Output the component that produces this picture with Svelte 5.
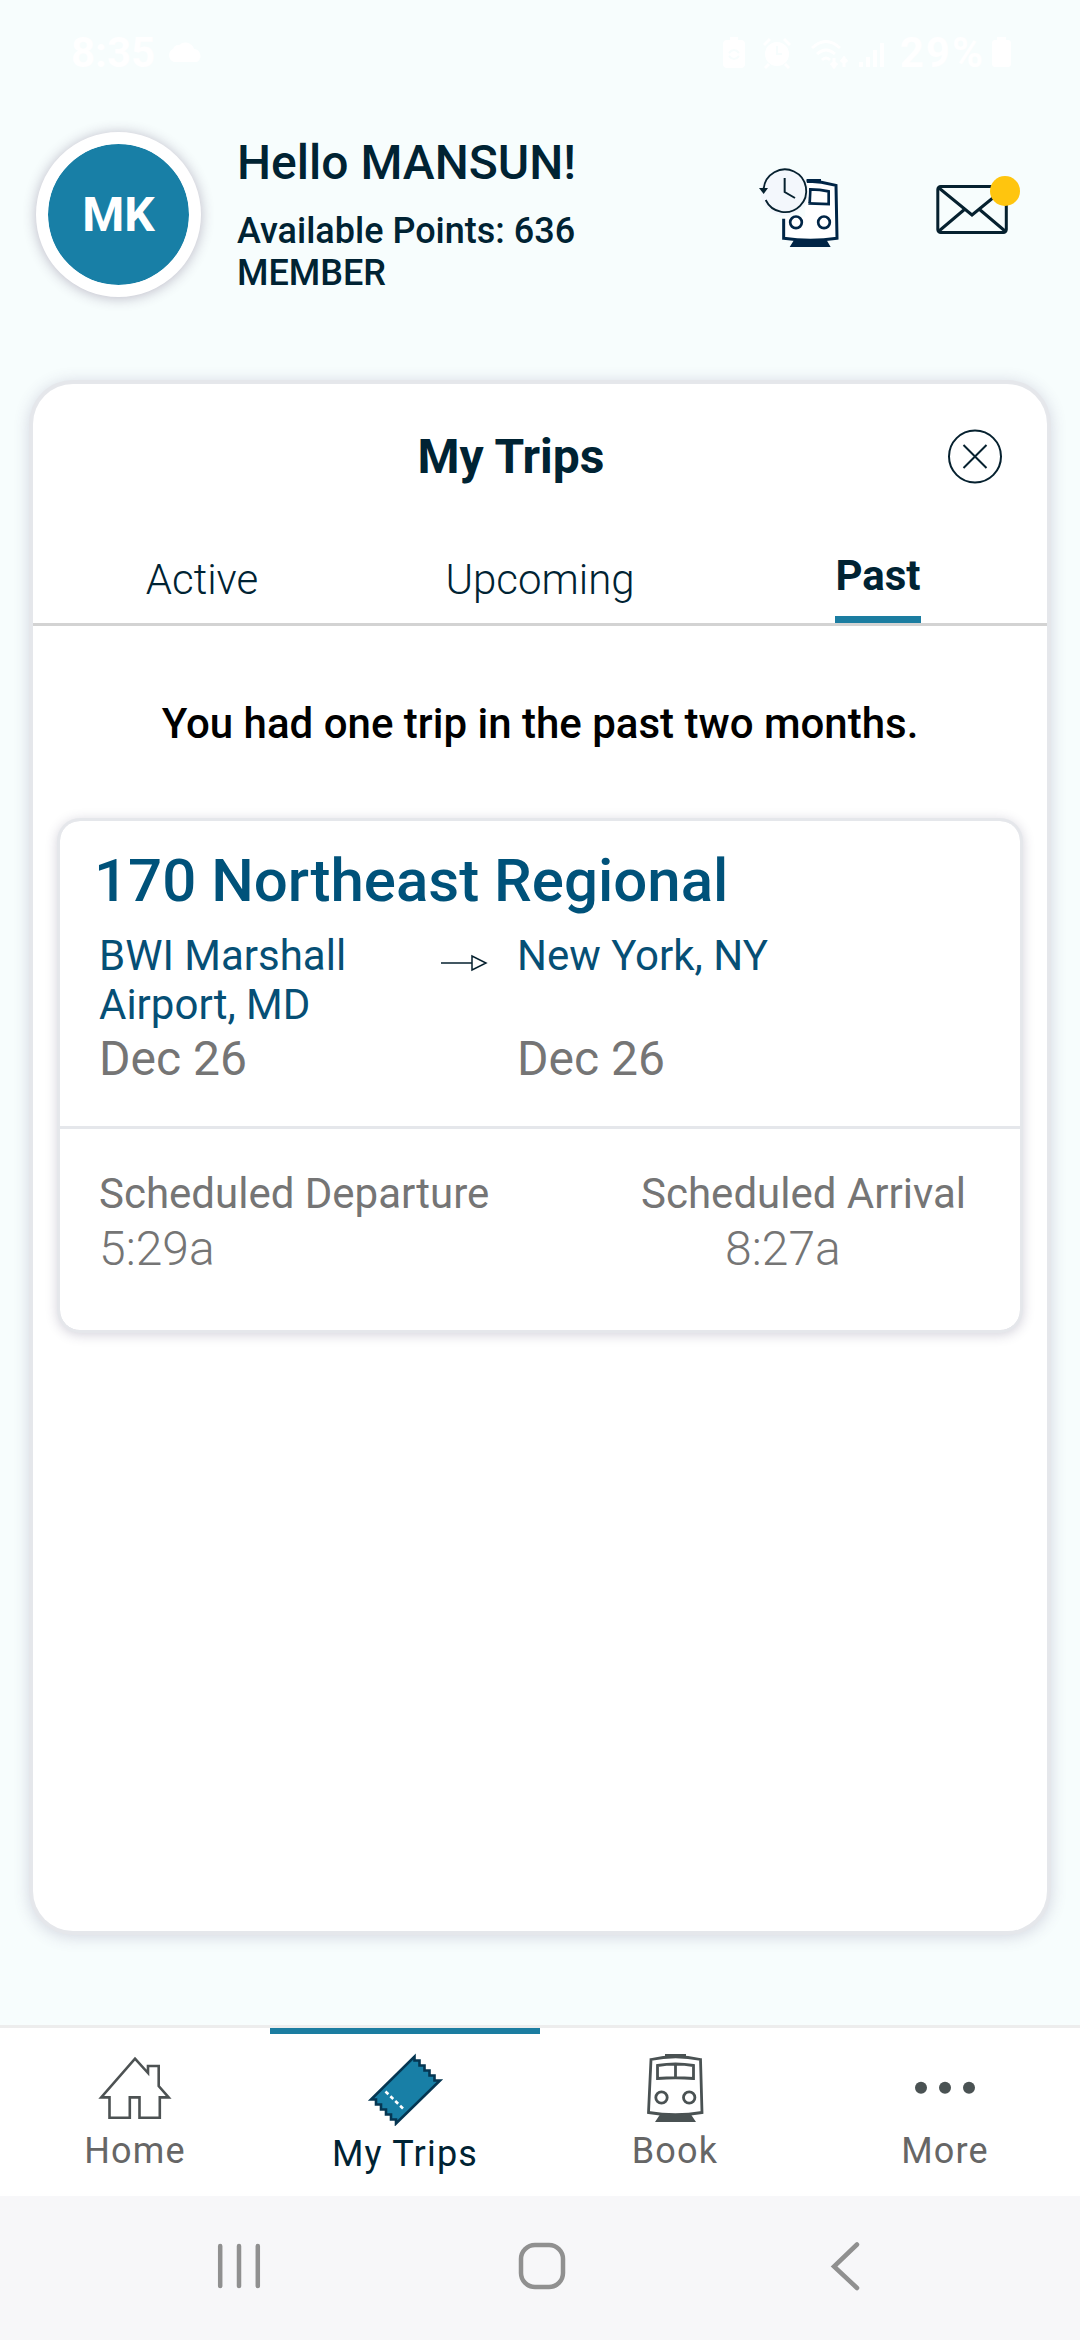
<script>
  const tabs = ['Active', 'Upcoming', 'Past'];
  const trip = {
    name: '170 Northeast Regional',
    from: 'BWI Marshall Airport, MD',
    to: 'New York, NY',
    date: 'Dec 26',
    departs: '5:29a',
    arrives: '8:27a'
  };
</script>

<div class="screen">
  <div class="status">
    <span class="clock">8:35</span>
    <svg class="cloud" width="38" height="24" viewBox="0 0 38 24"><path d="M8 22a7 7 0 0 1-1-13 6 6 0 0 1 6-4 9 9 0 0 1 15 4 7 7 0 0 1 3 13z" /></svg>
    <svg class="indicators" width="176" height="36" viewBox="0 0 176 36">
      <path d="M8 3h8v3h3q4 0 4 4v20q0 4-4 4H5q-4 0-4-4V10q0-4 4-4h3z" />
      <path class="cut" d="M7 19q5-6 10 0M17 22q-5 6-10 0" />
      <circle cx="55" cy="20" r="12" /><path class="line" d="M42 11l6-6M68 11l-6-6M47 30l-4 4M63 30l4 4" /><path class="cut" d="M55 12v8h5" />
      <path class="line" d="M90 14q14-13 28 0M95 20q9-8 18 0M100 26q4-4 8 0M112 24v9m-3-4l3 4 3-4M122 33v-9m-3 4l3-4 3 4" />
      <path d="M137 28h4v5h-4zM144 23h4v10h-4zM151 16h4v17h-4zM158 9h4v24h-4z" />
    </svg>
    <span class="percent">29%</span>
    <svg width="22" height="34" viewBox="0 0 22 34"><path d="M6 2h9v3h2q3 0 3 3v21q0 3-3 3H4q-3 0-3-3V8q0-3 3-3h2z" /></svg>
  </div>

  <header>
    <div class="avatar">MK</div>
    <div class="greeting">
      <div class="hello">Hello MANSUN!</div>
      <div class="points">Available Points: 636</div>
      <div class="points">MEMBER</div>
    </div>
    <svg class="history" width="120" height="120" viewBox="0 0 360 360">
      <path d="M131 200V265Q212 277 291 265L288 106Q244 94 196 93V200Z" fill="#fff" />
      <path d="M131 206V265Q212 277 291 265L288 106Q244 94 200 93" fill="none" stroke="#002546" stroke-width="9" />
      <path d="M200 87H243V99H200Z M164 267Q212 275 258 267L272 291H149Z" fill="#002546" />
      <path d="M205 160L266 162V124Q240 118 211 118L209 160" fill="none" stroke="#002546" stroke-width="8" />
      <g fill="none" stroke="#002546" stroke-width="8"><circle cx="168" cy="217" r="17.5" /><circle cx="252" cy="217" r="17.5" /></g>
      <circle cx="134" cy="126" r="72" fill="#f3f7fc" />
      <path d="M77 150A64 64 0 1 0 71 116" fill="none" stroke="#06212f" stroke-width="5.5" />
      <path d="M57 114H84L71 132Z" fill="#06212f" />
      <path d="M134 84V126L165 144" fill="none" stroke="#06212f" stroke-width="6" />
    </svg>
    <svg class="mail" width="90" height="64" viewBox="0 0 90 64">
      <g fill="none" stroke="#06212f" stroke-width="3">
        <rect x="3.8" y="12.5" width="68.5" height="46" rx="3" />
        <path d="M5 14L38 41 71 14M5 57L31 35M71 57L45 35" />
      </g>
      <circle cx="71" cy="17" r="15" fill="#ffc50e" />
    </svg>
  </header>

  <main>
    <div class="title">
      <h1>My Trips</h1>
      <svg width="56" height="56" viewBox="0 0 56 56" fill="none" stroke="#06212f" stroke-width="2"><circle cx="28" cy="27.5" r="26" /><path d="M16.5 16L39.5 39M39.5 16L16.5 39" /></svg>
    </div>
    <nav class="tabs">
      {#each tabs as tab}
        <div class="tab" class:current={tab === 'Past'}><span>{tab}</span></div>
      {/each}
    </nav>
    <p class="summary">You had one trip in the past two months.</p>

    <section class="trip">
      <div class="route">
        <h2>{trip.name}</h2>
        <div class="stations">
          <span class="from">{trip.from}</span>
          <svg width="48" height="20" viewBox="0 0 48 20" fill="none" stroke="#06212f" stroke-width="1.5"><path d="M1 10H32M32 3V17L46 10Z" /></svg>
          <span>{trip.to}</span>
        </div>
        <div class="dates"><span>{trip.date}</span><span>{trip.date}</span></div>
      </div>
      <div class="times">
        <div><div class="label">Scheduled Departure</div><div class="time">{trip.departs}</div></div>
        <div class="arrival"><div class="label">Scheduled Arrival</div><div class="time">{trip.arrives}</div></div>
      </div>
    </section>
  </main>

  <nav class="bottom">
    <div class="item">
      <svg width="80" height="74" viewBox="95 2052 80 74"><path d="M135 2058.7L148 2073V2066H158.7V2086L168.7 2097.4H159.8V2117.7H139.5V2097.4H129.8V2117.7H109.5V2097.4H101.2Z" fill="none" stroke="#4d5253" stroke-width="2.6" /></svg>
      <span>Home</span>
    </div>
    <div class="item active">
      <svg width="80" height="74" viewBox="365 2052 80 74">
        <path d="M414.5 2056.5v4h5v5h5v5h5v5h5v5h5.5L396 2123.5v-4h-5v-5h-5v-5h-5v-5h-5v-5h-5Z" fill="#187fa6" stroke="#053652" stroke-width="2.6" />
        <path d="M385.5 2091.5L403.5 2109" stroke="#fff" stroke-width="2.6" stroke-dasharray="4 2.8" />
      </svg>
      <span>My Trips</span>
    </div>
    <div class="item">
      <svg width="80" height="74" viewBox="635 2052 80 74" fill="none" stroke="#4a5253" stroke-width="2.8">
        <path d="M651 2059.5Q675.5 2054 700.5 2059.5L702 2112.5Q675.5 2117 648.5 2112.5Z" />
        <path d="M657.5 2065.5Q675.5 2062.5 693.5 2065.5V2078.5Q675.5 2077 657.5 2078.5ZM675.5 2064V2078" />
        <circle cx="661.5" cy="2097.5" r="5.7" /><circle cx="689.2" cy="2097.5" r="5.7" />
        <path d="M665 2054H686V2058H665ZM660 2114.5Q675.5 2116.5 691 2114.5L696 2122H655Z" fill="#4a5253" stroke="none" />
      </svg>
      <span>Book</span>
    </div>
    <div class="item">
      <svg width="80" height="74" viewBox="905 2052 80 74" fill="#4a5253"><circle cx="921" cy="2087.7" r="6" /><circle cx="945" cy="2087.7" r="6" /><circle cx="969" cy="2087.7" r="6" /></svg>
      <span>More</span>
    </div>
  </nav>

  <div class="system">
    <svg width="50" height="50" viewBox="0 0 50 50"><path d="M6.2 5V45M25 5V45M43.8 5V45" stroke-linecap="round" /></svg>
    <svg width="50" height="50" viewBox="0 0 50 50"><rect x="4" y="4" width="42" height="42" rx="14" /></svg>
    <svg width="50" height="50" viewBox="0 0 50 50"><path d="M37 3.5L14 25.5 37 47" stroke-linecap="round" /></svg>
  </div>
</div>

<style>
  :global(body) { margin: 0; }
  .screen { width: 1080px; height: 2340px; display: flex; flex-direction: column; overflow: hidden; background: #f7fdfd; color: #002333; font-family: Roboto, sans-serif; }
  svg { display: block; flex: none; }
  h1, h2, p { margin: 0; }

  .status { box-sizing: border-box; height: 88px; padding: 16px 67px 0 71px; display: flex; align-items: center; color: #fff; font-size: 42px; font-weight: 700; flex: none; }
  .status svg { fill: #fff; }
  .cloud { margin-left: 11px; }
  .indicators { margin-left: auto; }
  .status .line { fill: none; stroke: #fff; stroke-width: 3; }
  .status .cut { fill: none; stroke: #f7fdfd; stroke-width: 2; }
  .percent { margin: 0 6px 0 2px; letter-spacing: 2px; }

  header { height: 296px; display: flex; flex: none; }
  .avatar { box-sizing: border-box; width: 165px; height: 165px; margin: 44px 36px 0 36px; border: 12px solid #fff; border-radius: 50%; background: #187fa6; background-clip: padding-box; box-shadow: 0 1px 13px rgba(60, 40, 80, .32); color: #fff; font-size: 48px; font-weight: 700; line-height: 141px; text-align: center; flex: none; }
  .greeting { width: 503px; padding-top: 47px; font-weight: 500; white-space: nowrap; }
  .hello { font-size: 48px; line-height: 56px; margin-bottom: 19px; }
  .points { font-size: 36px; line-height: 42px; }
  .history { margin-top: 62px; }
  .mail { margin: 86px 0 0 74px; }

  main { box-sizing: border-box; width: 1014px; height: 1547px; margin: 0 33px; border-radius: 40px; background: #fff; box-shadow: 0 0 0 4px #e5e7eb, 0 2px 16px 4px rgba(70, 60, 110, .2); flex: none; }
  .title { height: 145px; display: flex; align-items: center; box-sizing: border-box; padding: 0 44px 0 42px; }
  h1 { flex: 1; text-align: center; font-size: 48px; font-weight: 700; line-height: 56px; padding-top: 1px; }
  .tabs { box-sizing: border-box; height: 97px; border-bottom: 3px solid #d3d3d3; display: grid; grid-template-columns: repeat(3, 1fr); }
  .tab { display: flex; justify-content: center; font-size: 42px; font-weight: 300; line-height: 48px; }
  .tab span { padding-top: 27px; }
  .current { font-weight: 700; }
  .current span { border-bottom: 7px solid #1b7da1; padding-top: 23px; }
  .summary { margin-top: 74px; font-size: 42px; font-weight: 500; line-height: 48px; text-align: center; color: #000; }

  .trip { box-sizing: border-box; height: 509px; margin: 73px 27px 0; border-radius: 20px; box-shadow: 0 0 0 3px #e5e7eb, 0 2px 12px 3px rgba(60, 50, 90, .22); }
  .route { box-sizing: border-box; height: 308px; padding: 27px 35px 0 39px; border-bottom: 3px solid #e5e7eb; }
  h2 { margin-left: -5px; font-size: 60px; font-weight: 500; line-height: 66px; color: #00527a; }
  .stations { display: grid; grid-template-columns: 341px 77px 1fr; padding-top: 17px; font-size: 42px; line-height: 49px; color: #064f75; }
  .from { width: 280px; }
  .stations svg { margin-top: 22px; }
  .dates { display: grid; grid-template-columns: 418px 1fr; font-size: 48px; line-height: 58px; color: #757575; margin-top: 1px; }
  .times { display: flex; justify-content: space-between; padding: 40px 54px 0 39px; color: #757575; }
  .label { font-size: 42px; line-height: 49px; }
  .time { font-size: 48px; font-weight: 300; line-height: 60px; padding-top: 1px; }
  .arrival .time { padding-left: 84px; }

  .bottom { box-sizing: border-box; height: 171px; margin-top: 94px; border-top: 3px solid #ededed; background: #fff; display: grid; grid-template-columns: repeat(4, 1fr); flex: none; }
  .item { display: flex; flex-direction: column; align-items: center; padding-top: 24px; font-size: 36px; line-height: 42px; letter-spacing: 1.2px; color: #666; }
  .item span { margin-top: 4px; }
  .active { border-top: 6px solid #1b7da1; padding-top: 18px; color: #002333; }
  .active span { margin-top: 7px; }

  .system { box-sizing: border-box; height: 144px; background: #f7f7f9; display: flex; justify-content: center; gap: 253px; padding: 0 0 4px 3px; align-items: center; flex: none; }
  .system svg { fill: none; stroke: #909090; stroke-width: 4.5; }
</style>
